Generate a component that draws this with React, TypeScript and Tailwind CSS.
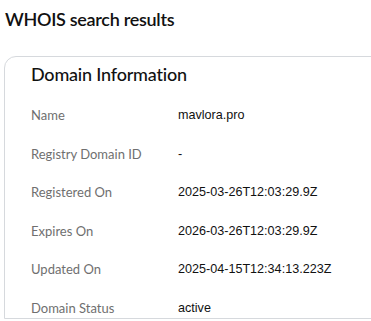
import React from 'react';

const rows = [
  { label: 'Name', value: 'mavlora.pro' },
  { label: 'Registry Domain ID', value: '-' },
  { label: 'Registered On', value: '2025-03-26T12:03:29.9Z' },
  { label: 'Expires On', value: '2026-03-26T12:03:29.9Z' },
  { label: 'Updated On', value: '2025-04-15T12:34:13.223Z' },
  { label: 'Domain Status', value: 'active' },
];

export default function App() {
  return (
    <div className="h-[321px] w-[371px] overflow-hidden bg-white font-['Lato',sans-serif] text-[#111]">
      <h1 className="px-[5px] pt-[7px] text-[18px] font-semibold leading-[24px] tracking-[-0.3px]">WHOIS search results</h1>
      <div className="ml-[4px] mt-[25px] w-[420px] rounded-t-[12px] border border-[#d6d9dd]">
        <h2 className="pl-[26px] pt-[5px] text-[18px] font-medium leading-[24px] tracking-[-0.2px]">Domain Information</h2>
        <dl className="mt-[20px] grid grid-cols-[147px_1fr] gap-y-[19px] pl-[26px] text-[13px] leading-[19.5px]">
          {rows.map(({ label, value }) => (
            <React.Fragment key={label}>
              <dt className="text-[#6f6f6f]">{label}</dt>
              <dd className="font-['Liberation_Sans',sans-serif] text-[12.6px]">{value}</dd>
            </React.Fragment>
          ))}
        </dl>
      </div>
    </div>
  );
}
